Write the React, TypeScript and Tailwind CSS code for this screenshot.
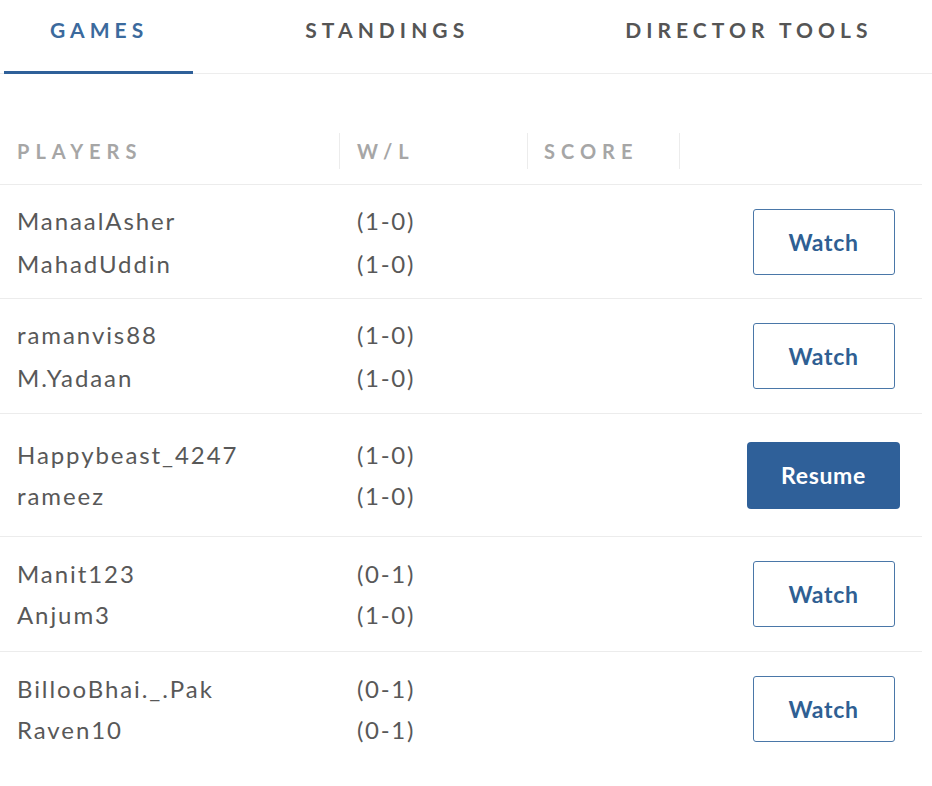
import React, { useState } from 'react'

type Game = {
  id: number
  players: [string, string]
  records: [string, string]
  action: 'watch' | 'resume'
  leading: string
  pad: string
}

const games: Game[] = [
  { id: 1, players: ['ManaalAsher', 'MahadUddin'], records: ['(1-0)', '(1-0)'], action: 'watch', leading: 'leading-[43px]', pad: 'pt-[14px] pb-[13px]' },
  { id: 2, players: ['ramanvis88', 'M.Yadaan'], records: ['(1-0)', '(1-0)'], action: 'watch', leading: 'leading-[43px]', pad: 'py-[14px]' },
  { id: 3, players: ['Happybeast_4247', 'rameez'], records: ['(1-0)', '(1-0)'], action: 'resume', leading: 'leading-[41px]', pad: 'py-[20px]' },
  { id: 4, players: ['Manit123', 'Anjum3'], records: ['(0-1)', '(1-0)'], action: 'watch', leading: 'leading-[41px]', pad: 'py-[16px]' },
  { id: 5, players: ['BillooBhai._.Pak', 'Raven10'], records: ['(0-1)', '(0-1)'], action: 'watch', leading: 'leading-[41px]', pad: 'py-[16px]' },
]

const tabs = [
  { label: 'GAMES', gap: '' },
  { label: 'STANDINGS', gap: 'ml-[66px]' },
  { label: 'DIRECTOR TOOLS', gap: 'ml-[65px]' },
]

const App: React.FC = () => {
  const [activeTab, setActiveTab] = useState('GAMES')

  return (
    <div className="min-h-screen w-[932px] bg-white font-['Lato','Liberation_Sans',sans-serif]">
      {/* Tabs */}
      <div className="flex border-b border-[#ededed] pl-[4px]">
        {tabs.map((tab) => {
          const isActive = tab.label === activeTab
          return (
            <button
              key={tab.label}
              onClick={() => setActiveTab(tab.label)}
              className={
                'pl-[46px] pr-[45px] pt-[18px] pb-[29px] text-[21px] leading-[24px] font-bold tracking-[0.24em] border-b-[3px] -mb-px ' +
                (isActive ? 'text-[#3b6a9d] border-[#2f6099]' : 'text-[#555555] border-transparent') +
                (tab.gap ? ' ' + tab.gap : '')
              }
            >
              {tab.label}
            </button>
          )
        })}
      </div>

      {/* Table */}
      <div className="w-[922px] mt-[59px]">
        <div className="flex border-b border-[#ececec] pb-[15px] text-[20px] font-bold tracking-[0.3em] text-[#a6a6a6]">
          <div className="w-[339px] h-[36px] flex items-center pl-[17px]">PLAYERS</div>
          <div className="w-[188px] h-[36px] flex items-center pl-[17px] border-l border-[#ececec]">W/L</div>
          <div className="w-[153px] h-[36px] flex items-center pl-[16px] border-x border-[#ececec]">SCORE</div>
        </div>

        {games.map((game, i) => (
          <div
            key={game.id}
            className={
              'flex items-center text-[24px] tracking-[0.08em] text-[#585858] ' +
              game.pad +
              (i < games.length - 1 ? ' border-b border-[#ececec]' : '')
            }
          >
            <div className={'w-[339px] pl-[17px] ' + game.leading}>
              <div>{game.players[0]}</div>
              <div>{game.players[1]}</div>
            </div>
            <div className={'w-[188px] pl-[18px] tracking-[0.07em] ' + game.leading}>
              <div>{game.records[0]}</div>
              <div>{game.records[1]}</div>
            </div>
            <div className="w-[153px]" />
            <div className="flex-1 flex justify-end pr-[22px]">
              <div className="w-[153px] flex justify-center">
                {game.action === 'resume' ? (
                  <button className="w-[153px] h-[67px] rounded-[4px] bg-[#2f6099] text-white text-[23px] font-bold tracking-[0.03em]">
                    Resume
                  </button>
                ) : (
                  <button className="w-[142px] h-[66px] rounded-[3px] border border-[#4a77a8] bg-white text-[#2f5f93] text-[23px] font-bold tracking-[0.03em]">
                    Watch
                  </button>
                )}
              </div>
            </div>
          </div>
        ))}
      </div>
    </div>
  )
}

export default App
